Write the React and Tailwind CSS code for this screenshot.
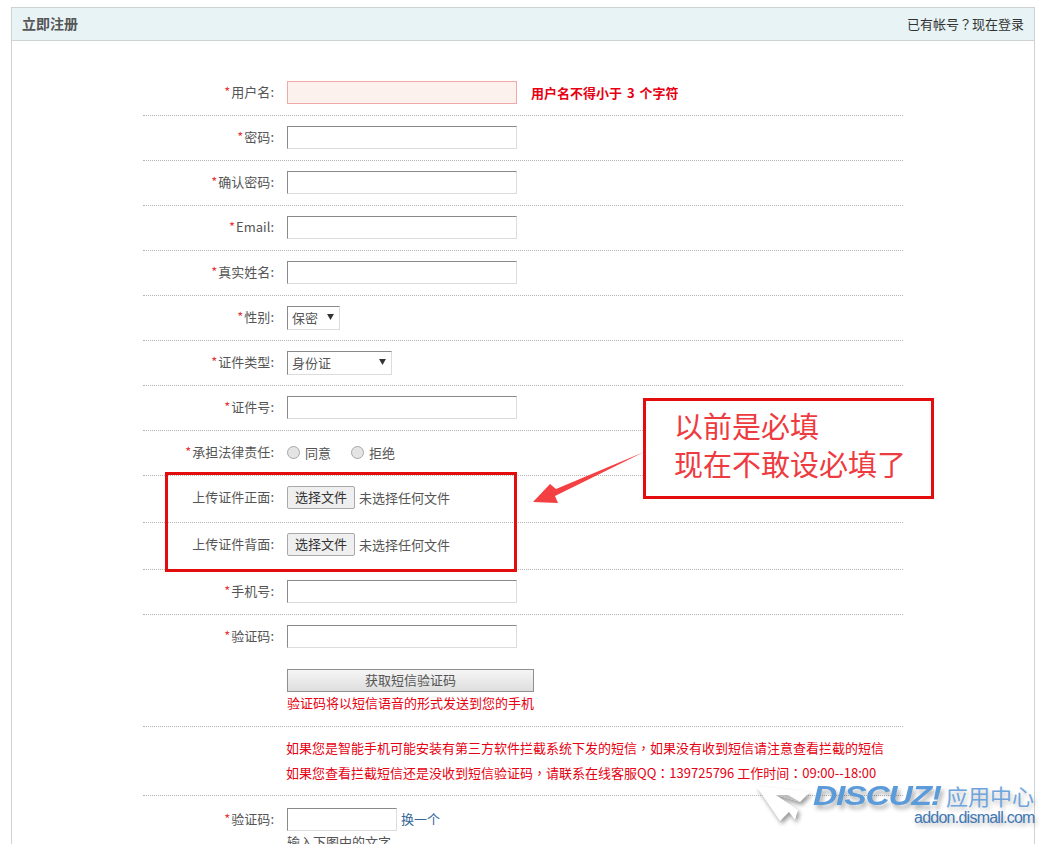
const font = 'font-["Microsoft_YaHei","Noto_Sans_CJK_SC",sans-serif]'

const inputClass = 'block h-[23px] border border-t-[#8a8a8a] border-l-[#8a8a8a] border-r-[#dcdcdc] border-b-[#dcdcdc] bg-white'

// the reference sets this punctuation centred in its cell
function Punct({ children }) {
  return <span className='font-["Noto_Sans_CJK_TC",sans-serif]'>{children}</span>
}

function Label({ required = true, children }) {
  return (
    <div className="w-[131px] shrink-0 text-right leading-[21px] text-[#555]">
      {required && <span className="inline-block w-[7px] text-left text-[#e4393c]">*</span>}
      {children}:
    </div>
  )
}

function Row({ label, required, height = 'h-[45px]', children }) {
  return (
    <div className={`flex gap-[13px] border-b border-dotted border-[#b5b5b5] pt-[10px] ${height}`}>
      <Label required={required}>{label}</Label>
      <div className="min-w-0 flex-1">{children}</div>
    </div>
  )
}

function TextInput() {
  return <input className={`${inputClass} w-[230px]`} />
}

function SelectBox({ value, width }) {
  return (
    <div className={`relative h-[24px] ${width}`}>
      <select
        defaultValue={value}
        className="h-full w-full appearance-none border border-t-[#8a8a8a] border-l-[#8a8a8a] border-r-[#dcdcdc] border-b-[#dcdcdc] bg-white pl-[4px] text-[13px] text-[#555] outline-none"
      >
        <option>{value}</option>
      </select>
      <svg className="absolute right-[6px] top-[8px] h-[6px] w-[7px]" viewBox="0 0 8 7">
        <path d="M0 0h8L4 7z" fill="#333" />
      </svg>
    </div>
  )
}

function Radio({ label }) {
  return (
    <span className="flex items-center gap-[5px] leading-[21px]">
      <span className="h-[13px] w-[13px] rounded-full border border-[#a8a8a8] bg-[#e4e4e4]" />
      {label}
    </span>
  )
}

function FileInput() {
  return (
    <div className="flex items-center gap-[4px] leading-[21px] text-[#555]">
      <button className="h-[23px] w-[68px] rounded-[2px] border border-[#a9a9a9] bg-[#efefef] pb-[2px] text-[13px] leading-none text-[#333]">
        选择文件
      </button>
      未选择任何文件
    </div>
  )
}

export default function App() {
  return (
    <div className={`relative h-[844px] overflow-hidden bg-white text-[13px] ${font}`}>
      <div className="ml-[11px] mt-[7px] h-[900px] w-[1024px] border border-[#cdd3d5]">
        <div className="flex h-[33px] items-center justify-between border-b border-[#cdd3d5] bg-[#e8f3f5] pl-[10px] pr-[10px]">
          <span className="pb-[1px] text-[14px] font-bold text-[#555]">立即注册</span>
          <span className="pb-[1px] text-[#333]">已有帐号<Punct>？</Punct>现在登录</span>
        </div>

        <div className="ml-[131px] w-[760px] pt-[30px]">
          <div className="flex h-[45px] gap-[13px] border-b border-dotted border-[#b5b5b5] pt-[10px]">
            <Label>用户名</Label>
            <input className="block h-[23px] w-[230px] border border-[#f0a8a8] bg-[#fdf1ee]" />
            <span className="ml-[1px] font-bold leading-[23px] text-[#e60012] [word-spacing:2px]">用户名不得小于 3 个字符</span>
          </div>
          <Row label="密码"><TextInput /></Row>
          <Row label="确认密码"><TextInput /></Row>
          <Row label="Email"><TextInput /></Row>
          <Row label="真实姓名"><TextInput /></Row>
          <Row label="性别"><SelectBox value="保密" width="w-[53px]" /></Row>
          <Row label="证件类型"><SelectBox value="身份证" width="w-[105px]" /></Row>
          <Row label="证件号"><TextInput /></Row>
          <Row label="承担法律责任">
            <div className="flex h-[23px] items-center gap-[20px] text-[#555]">
              <Radio label="同意" />
              <Radio label="拒绝" />
            </div>
          </Row>
          <Row label="上传证件正面" required={false} height="h-[47px]"><FileInput /></Row>
          <Row label="上传证件背面" required={false} height="h-[47px]"><FileInput /></Row>
          <Row label="手机号"><TextInput /></Row>
          <Row label="验证码" height="h-[112px]">
            <TextInput />
            <button className="mt-[21px] block h-[23px] w-[247px] border border-[#8f8f8f] bg-gradient-to-b from-[#f6f6f6] to-[#dedede] pb-[2px] text-[13px] leading-none text-[#555]">
              获取短信验证码
            </button>
            <p className="mt-[1px] leading-[20px] text-[#e60012]">验证码将以短信语音的形式发送到您的手机</p>
          </Row>
          <div className="h-[69px] border-b border-dotted border-[#b5b5b5] pl-[143px] pt-[8px] leading-[25px] text-[#e60012]">
            <p className="whitespace-nowrap">如果您是智能手机可能安装有第三方软件拦截系统下发的短信<Punct>，</Punct>如果没有收到短信请注意查看拦截的短信</p>
            <p className="whitespace-nowrap">如果您查看拦截短信还是没收到短信验证码<Punct>，</Punct>请联系在线客服QQ<Punct>：</Punct>139725796 工作时间<Punct>：</Punct>09:00--18:00</p>
          </div>
          <div className="flex gap-[13px] pt-[12px]">
            <Label>验证码</Label>
            <div>
              <div className="flex items-center gap-[4px]">
                <input className={`${inputClass} w-[110px]`} />
                <a className="pb-[2px] text-[#336699]">换一个</a>
              </div>
              <p className="mt-[1px] leading-[20px] text-[#555]">输入下图中的文字</p>
            </div>
          </div>
        </div>
      </div>

      {/* annotations drawn over the form */}
      <div className="absolute left-[165px] top-[472px] h-[100px] w-[352px] border-[3px] border-[#e30d0d]" />
      <div className="absolute left-[643px] top-[398px] h-[101px] w-[291px] border-[3px] border-[#e30d0d] bg-white pl-[28px] pt-[5px] text-[29px] leading-[38px] text-[#ee3b3f]">
        <p>以前是必填</p>
        <p className="whitespace-nowrap">现在不敢设必填了</p>
      </div>
      <svg className="absolute left-[530px] top-[448px] h-[60px] w-[116px]" viewBox="530 448 116 60">
        <path d="M644 452 556 489 550 484 533 502 558 503 555 496z" fill="#f43f43" />
      </svg>

      {/* watermark */}
      <svg className="absolute left-[750px] top-[778px] h-[52px] w-[80px] drop-shadow-[2px_3px_2px_rgba(0,0,0,0.4)]" viewBox="750 778 80 52">
        <path d="M756 786 810 792 800 802 776 795 798 810 795 820 789 812 780 821z" fill="#fff" />
        <path d="M776 795 800 802 788 795z" fill="#bdbdbd" />
      </svg>
      <span className="absolute left-[813px] top-[778px] origin-left scale-x-[1.2] font-['Liberation_Sans',sans-serif] text-[28px] font-bold italic leading-[36px] tracking-[-1px] text-[#5b9bd9] [text-shadow:2px_4px_4px_rgba(0,0,0,0.3)]">
        DISCUZ!
      </span>
      <span className="absolute left-[946px] top-[780px] text-[22px] leading-[30px] text-[#6fa5dc] [text-shadow:2px_3px_4px_rgba(0,0,0,0.25)]">
        应用中心
      </span>
      <span className="absolute left-[914px] top-[808px] font-['Liberation_Sans',sans-serif] text-[16px] leading-[20px] tracking-[-0.75px] text-[#3f78b5] [text-shadow:2px_3px_4px_rgba(0,0,0,0.25)]">
        addon.dismall.com
      </span>
    </div>
  )
}
